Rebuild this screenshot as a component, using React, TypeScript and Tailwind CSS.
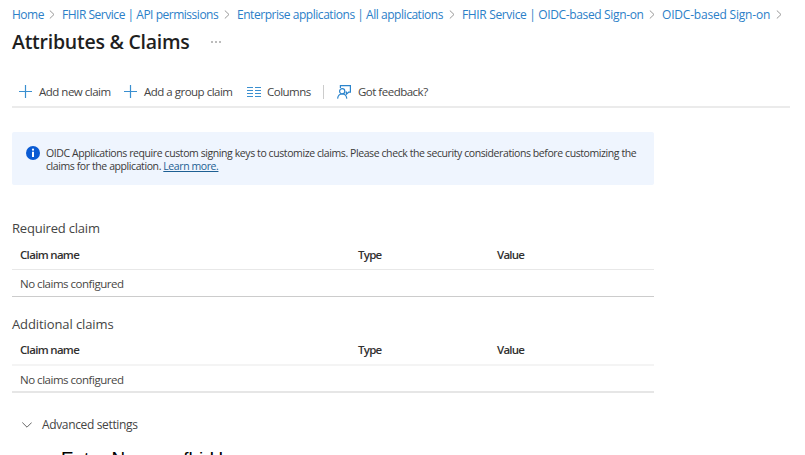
import React from "react";

const crumbs = [
  { label: "Home", cls: "w-[50px] tracking-[-0.5px]" },
  { label: "FHIR Service | API permissions", cls: "w-[175px] tracking-[-0.48px]" },
  { label: "Enterprise applications | All applications", cls: "w-[225px] tracking-[-0.46px]" },
  { label: "FHIR Service | OIDC-based Sign-on", cls: "w-[200px] tracking-[-0.35px]" },
  { label: "OIDC-based Sign-on", cls: "w-[127px] tracking-[-0.2px]" },
];

function Plus() {
  return (
    <svg width="13" height="13" viewBox="0 0 13 13" fill="none" stroke="#3a8fd0" strokeWidth="1.2" className="shrink-0">
      <path d="M6.500 0v13M0 6.500h13" />
    </svg>
  );
}

function ColumnsIcon() {
  return (
    <svg width="14" height="10" viewBox="0 0 14 10" fill="none" stroke="#3a8fd0" className="shrink-0">
      <path d="M0 .500h6M8 .500h6M0 3.500h6M8 3.500h6M0 6.500h6M8 6.500h6M0 9.500h6M8 9.500h6" />
    </svg>
  );
}

function FeedbackIcon() {
  return (
    <svg width="14" height="14" viewBox="0 0 14 14" fill="none" stroke="#2b84cc" strokeWidth="1.2" className="shrink-0">
      <path d="M3.400 3V.700h10v6.500h-1.800L9.400 9.200V7.200H8.600" />
      <circle cx="5.2" cy="6.3" r="2.6" />
      <path d="M.600 13.600C.900 10.600 2.700 9 5.200 9s4.300 1.600 4.600 4.600" />
    </svg>
  );
}

function ClaimTable({ head, body }: { head: string; body: string }) {
  return (
    <div className="w-[642px] text-[11.5px]">
      <div className={"flex h-[31px] pl-2 leading-[18px] font-semibold text-[#323130] " + head}>
        <span className="w-[338px] tracking-[-0.68px]">Claim name</span>
        <span className="w-[139px] tracking-[-0.75px]">Type</span>
        <span className="tracking-[-0.75px]">Value</span>
      </div>
      <div className={"flex h-[27px] pl-2 leading-[18px] tracking-[-0.48px] text-[#484644] " + body}>
        <span>No claims configured</span>
      </div>
    </div>
  );
}

export default function App() {
  return (
    <div className="h-[455px] w-[805px] overflow-hidden bg-white pl-3 font-['Open_Sans',sans-serif] whitespace-nowrap text-[#444]">
      <nav className="flex h-[28px] items-center text-[12px] text-[#2b80c8]">
        {crumbs.map((c) => (
          <div key={c.label} className={"flex shrink-0 items-center " + c.cls}>
            <span className="flex-1 pt-px">{c.label}</span>
            <svg width="6" height="9" viewBox="0 0 6 9" fill="none" stroke="#999" className="mr-[7px]">
              <path d="M.800.500 5 4.500.800 8.500" />
            </svg>
          </div>
        ))}
      </nav>
      <header className="flex h-[28px] items-center">
        <h1 className="w-[199px] text-[19.5px] font-semibold tracking-[-0.25px] text-[#1f1f1f]">Attributes &amp; Claims</h1>
        <svg width="10" height="2" viewBox="0 0 10 2" fill="#666">
          <circle cx="1" cy="1" r=".8" /><circle cx="5" cy="1" r=".8" /><circle cx="9" cy="1" r=".8" />
        </svg>
      </header>
      <div className="mt-[21px] flex h-[31px] w-[778px] items-center border-b-2 border-[#ebebeb] pl-[7px] text-[11.5px] tracking-[-0.5px]">
        <div className="flex w-[105px] items-center gap-[7px]"><Plus /><span>Add new claim</span></div>
        <div className="flex w-[123px] items-center gap-[7px]"><Plus /><span>Add a group claim</span></div>
        <div className="flex w-[76px] items-center gap-[6px]"><ColumnsIcon /><span>Columns</span></div>
        <div className="h-[14px] w-px bg-[#ccc]" />
        <div className="ml-[13px] flex items-center gap-[7px]"><FeedbackIcon /><span>Got feedback?</span></div>
      </div>
      <section className="mt-6 flex h-[53px] w-[642px] rounded-[2px] bg-[#eff5fe] pt-[14px] pl-[14px] text-[10.5px] leading-[13px] tracking-[-0.41px] text-[#3b3a39]">
        <svg width="14" height="14" viewBox="0 0 14 14" className="mr-[6px] shrink-0">
          <circle cx="7" cy="7" r="7" fill="#0a5bd3" />
          <path d="M6 5.700h2v5.300H6z" fill="#fff" /><circle cx="7" cy="3.700" r="1.100" fill="#fff" />
        </svg>
        <div className="pt-px">
          <div>OIDC Applications require custom signing keys to customize claims. Please check the security considerations before customizing the</div>
          <div>claims for the application. <a className="text-[#1d5f93] underline">Learn more.</a></div>
        </div>
      </section>
      <h2 className="mt-[33px] h-[21px] text-[13px] leading-[20px] tracking-[-0.2px]">Required claim</h2>
      <ClaimTable head="border-b border-[#e8e8e8] pt-[7px]" body="border-b border-[#ccc] pt-[5px]" />
      <h2 className="mt-[17px] h-[21px] text-[13px] leading-[20px] tracking-[-0.1px]">Additional claims</h2>
      <ClaimTable head="border-b-2 border-[#f4f4f4] pt-[6px]" body="border-b-2 border-[#e6e6e6] pt-[5px]" />
      <div className="mt-[22px] flex h-5 items-center pl-[10px] text-[12px] tracking-[-0.35px]">
        <svg width="10" height="6" viewBox="0 0 10 6" fill="none" stroke="#666" className="mr-[10px]"><path d="M.300.500 5 5.200 9.700.500" /></svg>
        <span>Advanced settings</span>
      </div>
      <p className="mt-[14px] ml-[49px] font-['Liberation_Sans',sans-serif] text-[18.9px] leading-[20px] text-black">Enter Name = fhirUser</p>
    </div>
  );
}
